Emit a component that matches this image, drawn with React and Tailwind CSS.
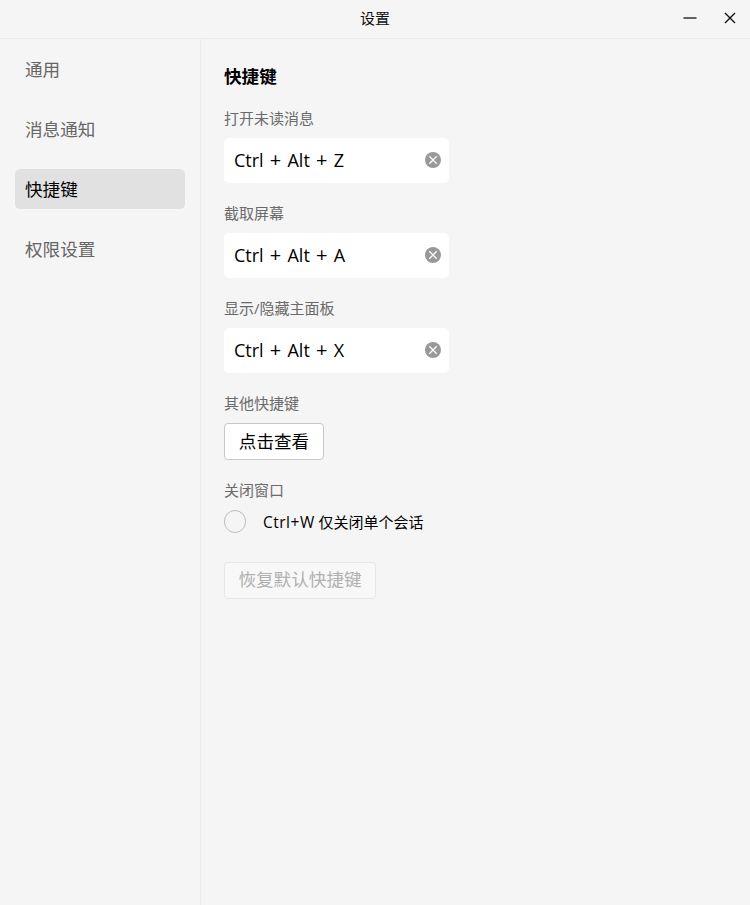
import React, { useState } from 'react';

const TABS = ['通用', '消息通知', '快捷键', '权限设置'];

const DEFAULT_SHORTCUTS = [
  { id: 'unread', label: '打开未读消息', keys: ['Ctrl', 'Alt', 'Z'] },
  { id: 'capture', label: '截取屏幕', keys: ['Ctrl', 'Alt', 'A'] },
  { id: 'panel', label: '显示/隐藏主面板', keys: ['Ctrl', 'Alt', 'X'] },
];

function TitleBar() {
  return (
    <header className="grid h-[39px] shrink-0 grid-cols-[1fr_auto_1fr] items-center border-b border-[#ebebeb] pb-0.5">
      <span />
      <h1 className="text-[15px] leading-[22px] text-[#111]">设置</h1>
      <div className="flex justify-end">
        <button type="button" className="flex h-9 w-10 items-center justify-center" aria-label="最小化">
          <svg width="14" height="14" viewBox="0 0 14 14" stroke="#222" strokeWidth="1.4">
            <path d="M0.5 7H13.5" />
          </svg>
        </button>
        <button type="button" className="flex h-9 w-10 items-center justify-center" aria-label="关闭">
          <svg width="12" height="12" viewBox="0 0 12 12" stroke="#111" strokeWidth="1.4">
            <path d="M1 1L11 11M11 1L1 11" />
          </svg>
        </button>
      </div>
    </header>
  );
}

function ShortcutField({ label, keys, onClear }) {
  return (
    <div className="mb-[19px]">
      <div className="mb-[9px] text-[15px] leading-[22px] text-[#6b6b6b]">{label}</div>
      <div className="flex h-[45px] w-[225px] items-center justify-between rounded-[5px] bg-white pr-2 pl-2.5">
        <span className="text-[18px] whitespace-pre text-black [word-spacing:1.5px]">
          {keys.map((key, i) => (
            <React.Fragment key={key}>
              {i > 0 && <span className="text-[20px] leading-none"><span className="text-[18px]"> </span>+<span className="text-[18px]"> </span></span>}
              {key}
            </React.Fragment>
          ))}
        </span>
        <button type="button" className="pb-px" onClick={onClear} aria-label="清除">
          <svg width="16" height="16" viewBox="0 0 16 16" className="block">
            <circle cx="8" cy="8" r="8" fill="#999" />
            <path d="M4.3 4.3L11.7 11.7M11.7 4.3L4.3 11.7" stroke="#fff" strokeWidth="1.3" />
          </svg>
        </button>
      </div>
    </div>
  );
}

export default function App() {
  const [tab, setTab] = useState('快捷键');
  const [shortcuts, setShortcuts] = useState(DEFAULT_SHORTCUTS);
  const [closeSingle, setCloseSingle] = useState(false);

  const changed = shortcuts.some((s) => s.keys.length === 0);

  function clearShortcut(id) {
    setShortcuts(shortcuts.map((s) => (s.id === id ? { ...s, keys: [] } : s)));
  }

  return (
    <div className="flex h-screen flex-col bg-[#f5f5f5] font-['Open_Sans','Noto_Sans_CJK_SC',sans-serif]">
      <TitleBar />
      <div className="flex flex-1">
        <nav className="flex w-[201px] shrink-0 flex-col gap-5 border-r border-[#ebebeb] px-[15px] pt-[10px]">
          {TABS.map((name) => (
            <button
              key={name}
              type="button"
              onClick={() => setTab(name)}
              className={[
                'h-10 w-[170px] rounded-[5px] px-2.5 text-left text-[17.6px]',
                tab === name ? 'bg-[#e1e1e1] text-black' : 'text-[#666]'
              ].join(' ')}
            >
              {name}
            </button>
          ))}
        </nav>

        <main className="flex-1 pt-6 pl-[23px]">
          <h2 className="mb-[17px] text-[17.6px] leading-[27px] font-bold text-black">快捷键</h2>

          {shortcuts.map((s) => (
            <ShortcutField key={s.id} label={s.label} keys={s.keys} onClear={() => clearShortcut(s.id)} />
          ))}

          <div className="mb-[9px] text-[15px] leading-[22px] text-[#6b6b6b]">其他快捷键</div>
          <button
            type="button"
            className="mb-[19px] flex h-[37px] w-[100px] items-center justify-center rounded-[4px] border border-[#c8c8c8] bg-white pb-px text-[17.6px] text-black"
          >
            点击查看
          </button>

          <div className="mb-[9px] text-[15px] leading-[22px] text-[#6b6b6b]">关闭窗口</div>
          <button
            type="button"
            className="mb-[29px] flex h-[23px] items-center"
            onClick={() => setCloseSingle(!closeSingle)}
          >
            <span
              className={[
                'mr-[17px] h-[23px] w-[22px] rounded-full border',
                closeSingle ? 'border-[#1890ff] bg-[#1890ff]' : 'border-[#bdbdbd]'
              ].join(' ')}
            />
            <span className="text-[15px] leading-[22px] text-black">
              <span className="text-[15.5px] tracking-[0.5px]">Ctrl+W</span> 仅关闭单个会话
            </span>
          </button>

          <button
            type="button"
            disabled={!changed}
            onClick={() => setShortcuts(DEFAULT_SHORTCUTS)}
            className="flex h-[37px] w-[152px] items-center justify-center rounded-[4px] border border-[#c8c8c8] bg-white pb-0.5 text-[17.6px] text-black disabled:border-[#e6e6e6] disabled:bg-[#f8f8f8] disabled:text-[#b0b0b0]"
          >
            恢复默认快捷键
          </button>
        </main>
      </div>
    </div>
  );
}
